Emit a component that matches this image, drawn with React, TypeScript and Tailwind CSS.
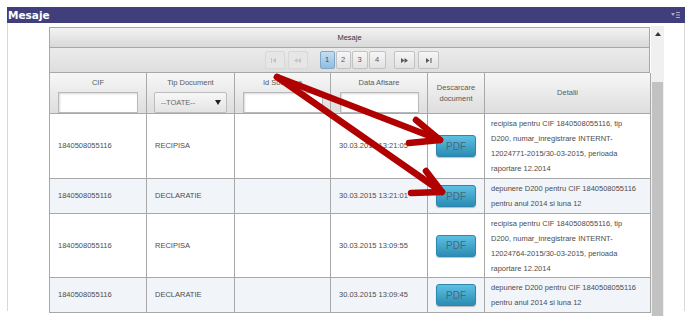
import React from "react";

// grila de mesaje, coloanele au latime fixa
const cols = "grid grid-cols-[97px_88px_96px_97px_57px_166px]";

type Row = {
  cif: string;
  tip: string;
  data: string;
  det: string[];
  h: string;
  alt: boolean;
};

const rows: Row[] = [
  {
    cif: "1840508055116",
    tip: "RECIPISA",
    data: "30.03.2015 13:21:05",
    det: [
      "recipisa pentru CIF 1840508055116, tip",
      "D200, numar_inregistrare INTERNT-",
      "12024771-2015/30-03-2015, perioada",
      "raportare 12.2014",
    ],
    h: "h-[65px]",
    alt: false,
  },
  {
    cif: "1840508055116",
    tip: "DECLARATIE",
    data: "30.03.2015 13:21:01",
    det: ["depunere D200 pentru CIF 1840508055116", "pentru anul 2014 si luna 12"],
    h: "h-[35px]",
    alt: true,
  },
  {
    cif: "1840508055116",
    tip: "RECIPISA",
    data: "30.03.2015 13:09:55",
    det: [
      "recipisa pentru CIF 1840508055116, tip",
      "D200, numar_inregistrare INTERNT-",
      "12024764-2015/30-03-2015, perioada",
      "raportare 12.2014",
    ],
    h: "h-[64px]",
    alt: false,
  },
  {
    cif: "1840508055116",
    tip: "DECLARATIE",
    data: "30.03.2015 13:09:45",
    det: ["depunere D200 pentru CIF 1840508055116", "pentru anul 2014 si luna 12"],
    h: "h-[35px]",
    alt: true,
  },
];

const cell = "border-r border-b border-[#a8a8a8] flex items-center";

function PagerIcon({ kind }: { kind: "first" | "prev" | "next" | "last" }) {
  return (
    <svg width="9" height="5" viewBox="0 0 9 5" className="fill-current">
      {kind === "first" && (
        <>
          <rect x="1" y="0" width="1" height="5" />
          <polygon points="6,0 6,5 2.5,2.5" />
        </>
      )}
      {kind === "prev" && (
        <>
          <polygon points="4.5,0 4.5,5 1,2.5" />
          <polygon points="8,0 8,5 4.5,2.5" />
        </>
      )}
      {kind === "next" && (
        <>
          <polygon points="1,0 1,5 4.5,2.5" />
          <polygon points="4.5,0 4.5,5 8,2.5" />
        </>
      )}
      {kind === "last" && (
        <>
          <polygon points="2,0 2,5 5.5,2.5" />
          <rect x="6.5" y="0" width="1" height="5" />
        </>
      )}
    </svg>
  );
}

function PagerBtn({
  children,
  w,
  active,
  disabled,
}: {
  children: React.ReactNode;
  w: string;
  active?: boolean;
  disabled?: boolean;
}) {
  return (
    <div
      className={
        "h-[18px] flex items-center justify-center rounded-[2px] border text-[7.5px] " +
        w +
        " " +
        (active
          ? "bg-gradient-to-b from-[#c5ddf0] to-[#8fbde3] border-[#7ea7c8] text-[#2b4e6e]"
          : disabled
          ? "bg-[#e6e6e6] border-[#d8d8d8] text-[#c4c4c4]"
          : "bg-gradient-to-b from-[#f6f6f6] to-[#e2e2e2] border-[#c2c2c2] text-[#555]")
      }
    >
      {children}
    </div>
  );
}

function Input({ w }: { w: string }) {
  return (
    <div
      className={
        "h-[21px] bg-white border border-[#b8b8b8] shadow-[inset_1px_1px_2px_rgba(0,0,0,0.15)] " + w
      }
    />
  );
}

export default function App() {
  return (
    <div
      className="relative w-[694px] h-[326px] bg-white pt-[7px] overflow-hidden"
      style={{ fontFamily: '"Liberation Sans", Arial, sans-serif' }}
    >
      {/* bara titlu */}
      <div className="ml-[7px] w-[678px] h-[16px] bg-[#413f7b] flex items-center justify-between pl-[1px] pr-[5px]">
        <span
          className="text-white font-bold text-[10.5px] leading-none"
          style={{ fontFamily: '"DejaVu Sans", sans-serif' }}
        >
          Mesaje
        </span>
        <svg width="9" height="6" viewBox="0 0 9 6" className="fill-[#a9a9c9]">
          <polygon points="0,1 4,1 2,4" />
          <rect x="5" y="0" width="4" height="1" />
          <rect x="5" y="2.5" width="4" height="1" />
          <rect x="5" y="5" width="4" height="1" />
        </svg>
      </div>

      {/* panou */}
      <div className="ml-[7px] w-[678px] h-[288px] border-l border-r border-[#d8d8d8] flex pl-[41px] pt-[4px]">
        <div className="w-[601px] text-[#4d4d4d] text-[7.5px]">
          {/* caption */}
          <div className="h-[20px] border border-b-0 border-[#a8a8a8] bg-gradient-to-b from-[#f3f3f3] to-[#d9d9d9] flex items-center justify-center text-[#333] font-medium">
            Mesaje
          </div>

          {/* pager */}
          <div className="h-[25px] border border-b-0 border-[#a8a8a8] bg-gradient-to-b from-[#ebebeb] to-[#dedede] flex items-center justify-center">
            <div className="flex items-center gap-[3px] ml-[4px]">
              <PagerBtn w="w-[20px]" disabled>
                <PagerIcon kind="first" />
              </PagerBtn>
              <PagerBtn w="w-[20px]" disabled>
                <PagerIcon kind="prev" />
              </PagerBtn>
              <div className="w-[6px]" />
              <div className="flex gap-[1px]">
                <PagerBtn w="w-[15px]" active>
                  1
                </PagerBtn>
                <PagerBtn w="w-[15px]">2</PagerBtn>
                <PagerBtn w="w-[16px]">3</PagerBtn>
                <PagerBtn w="w-[17px]">4</PagerBtn>
              </div>
              <div className="w-[2px]" />
              <PagerBtn w="w-[21px]">
                <PagerIcon kind="next" />
              </PagerBtn>
              <PagerBtn w="w-[21px]">
                <PagerIcon kind="last" />
              </PagerBtn>
            </div>
          </div>

          {/* cap de tabel */}
          <div className={cols + " h-[42px] border-l border-t border-[#a8a8a8] bg-gradient-to-b from-[#f7f7f7] to-[#dddddd] text-[#5a5a5a]"}>
            <div className="border-r border-b border-[#a8a8a8] flex flex-col items-center pt-[5px] gap-[4px]">
              <span className="leading-[10px]">CIF</span>
              <Input w="w-[80px]" />
            </div>
            <div className="border-r border-b border-[#a8a8a8] flex flex-col items-center pt-[5px] gap-[4px]">
              <span className="leading-[10px]">Tip Document</span>
              <div className="w-[73px] h-[21px] rounded-[2px] border border-[#bdbdbd] bg-gradient-to-b from-[#f7f7f7] to-[#e4e4e4] flex items-center justify-between pl-[6px] pr-[5px] text-[#666]">
                <span>--TOATE--</span>
                <svg width="6" height="5" viewBox="0 0 6 5" className="fill-[#222]">
                  <polygon points="0,0 6,0 3,5" />
                </svg>
              </div>
            </div>
            <div className="border-r border-b border-[#a8a8a8] flex flex-col items-center pt-[5px] gap-[4px]">
              <span className="leading-[10px]">Id Solicitare</span>
              <Input w="w-[80px]" />
            </div>
            <div className="border-r border-b border-[#a8a8a8] flex flex-col items-center pt-[5px] gap-[4px]">
              <span className="leading-[10px]">Data Afisare</span>
              <Input w="w-[79px]" />
            </div>
            <div className="border-r border-b border-[#a8a8a8] flex flex-col items-center justify-center text-center leading-[11px]">
              <span>Descarcare</span>
              <span>document</span>
            </div>
            <div className="border-r border-b border-[#a8a8a8] flex items-center justify-center">
              Detalii
            </div>
          </div>

          {/* randuri */}
          {rows.map((r, i) => (
            <div
              key={i}
              className={cols + " border-l border-[#a8a8a8] " + r.h + " " + (r.alt ? "bg-[#f1f4f9]" : "bg-white")}
            >
              <div className={cell + " pl-[8px]"}>{r.cif}</div>
              <div className={cell + " pl-[8px]"}>{r.tip}</div>
              <div className={cell} />
              <div className={cell + " pl-[8px]"}>{r.data}</div>
              <div className={cell + " pl-[8px]"}>
                <button className="w-[40px] h-[22px] rounded-[3px] border border-[#2c86ad] bg-gradient-to-b from-[#5cc0e3] to-[#2b8cb4] text-[10px] text-[#4a6878] shadow-[0_1px_1px_rgba(0,0,0,0.25)]">
                  PDF
                </button>
              </div>
              <div className={cell + " pl-[6px]"}>
                <div className="leading-[15px] whitespace-nowrap">
                  {r.det.map((l, j) => (
                    <div key={j}>{l}</div>
                  ))}
                </div>
              </div>
            </div>
          ))}
        </div>

        {/* scrollbar */}
        <div className="ml-[1px] w-[13px] h-[290px] -mt-[1px] bg-[#f0f0f0] flex flex-col items-center">
          <div className="h-[14px] flex items-center justify-center pt-[2px]">
            <svg width="6" height="4" viewBox="0 0 6 4" className="fill-[#333]">
              <polygon points="0,4 6,4 3,0" />
            </svg>
          </div>
          <div className="mt-[42px] w-[11px] flex-1 bg-[#c2c2c2]" />
        </div>
      </div>

      {/* sageti rosii de adnotare */}
      <svg
        className="absolute left-0 top-0 pointer-events-none"
        width="694"
        height="326"
        viewBox="0 0 694 326"
      >
        <g stroke="#b00000" strokeWidth="6.5" strokeLinecap="round" strokeLinejoin="round" fill="none">
          <line x1="277" y1="77" x2="440" y2="140" />
          <polyline points="416,120 440,140 409,143" />
          <line x1="277" y1="77" x2="442" y2="192" />
          <polyline points="426,171 442,192 411,193" />
        </g>
      </svg>
    </div>
  );
}
